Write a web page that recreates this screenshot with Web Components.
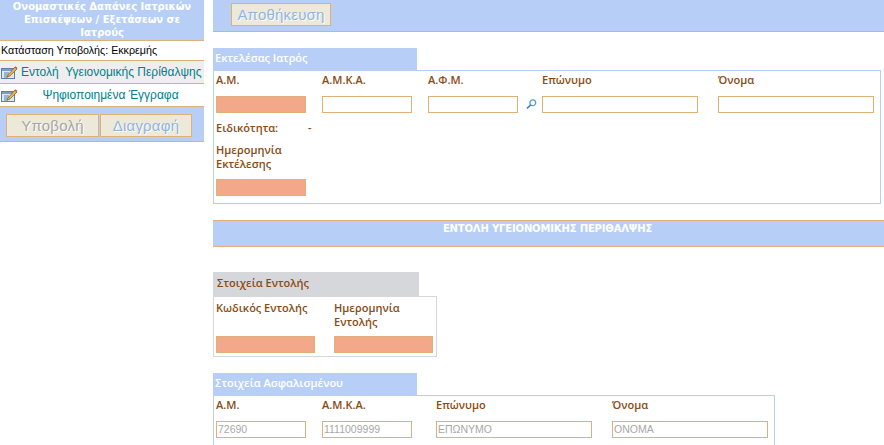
<!DOCTYPE html>
<html lang="el">
<head>
<meta charset="utf-8">
<title>Ονομαστικές Δαπάνες</title>
<style>
  html, body { margin: 0; height: 100%; overflow: hidden; background: #fff; }
  body { font-family: "DejaVu Sans", sans-serif; font-size: 10px; }
</style>
</head>
<body>

<template id="edit-icon">
  <svg width="18" height="14" viewBox="0 0 18 14">
    <rect x="1.5" y="3.5" width="13" height="10" fill="#dfe8f5" stroke="#5f7fa8"/>
    <rect x="2" y="4" width="12" height="2" fill="#7f9cc4"/>
    <path d="M4 8h5M4 10h5M4 12h4" stroke="#5f7fa8"/>
    <path d="M8 10l7-8 2 2-7 7-3 1z" fill="#e9b44c" stroke="#7a5a20" stroke-width=".7"/>
    <path d="M14.6 2.4l1-1.2 1.8 1.8-1 1.1z" fill="#c8503c"/>
  </svg>
</template>

<app-shell>
  <app-sidebar slot="side" heading="Ονομαστικές Δαπάνες Ιατρικών Επισκέψεων / Εξετάσεων σε Ιατρούς" status="Κατάσταση Υποβολής: Εκκρεμής">
    <side-link active>Εντολή&nbsp; Υγειονομικής Περίθαλψης</side-link>
    <side-link center>Ψηφιοποιημένα Έγγραφα</side-link>
    <button-bar slot="actions">
      <ui-button width="93" tone="grey">Υποβολή</ui-button>
      <ui-button width="92">Διαγραφή</ui-button>
    </button-bar>
  </app-sidebar>

  <main-area>
    <top-bar><ui-button width="100">Αποθήκευση</ui-button></top-bar>

    <form-panel style="margin-top:16px" heading="Εκτελέσας Ιατρός" tab-width="204" panel-height="134"
      cols="90px 90px 90px 156px 156px" gaps="16px 16px 24px 20px">
      <form-field label="Α.Μ." kind="req"></form-field>
      <form-field label="Α.Μ.Κ.Α."></form-field>
      <form-field label="Α.Φ.Μ." search></form-field>
      <form-field label="Επώνυμο"></form-field>
      <form-field label="Όνομα"></form-field>
      <info-row label="Ειδικότητα:" value="-"></info-row>
      <form-field class="date" label="Ημερομηνία Εκτέλεσης" kind="req"></form-field>
    </form-panel>

    <section-bar>ΕΝΤΟΛΗ ΥΓΕΙΟΝΟΜΙΚΗΣ ΠΕΡΙΘΑΛΨΗΣ</section-bar>

    <form-panel style="margin-top:25px" heading="Στοιχεία Εντολής" tab-width="206" panel-width="224" panel-height="61" tone="grey"
      cols="99px 99px" gaps="19px">
      <form-field class="tall" label="Κωδικός Εντολής" kind="req"></form-field>
      <form-field class="tall" label="Ημερομηνία Εντολής" kind="req"></form-field>
    </form-panel>

    <form-panel style="margin-top:16px" heading="Στοιχεία Ασφαλισμένου" tab-width="204" panel-width="562" panel-height="60"
      cols="90px 90px 156px 156px" gaps="16px 24px 20px">
      <form-field label="Α.Μ." value="72690"></form-field>
      <form-field label="Α.Μ.Κ.Α." value="1111009999"></form-field>
      <form-field label="Επώνυμο" value="ΕΠΩΝΥΜΟ"></form-field>
      <form-field label="Όνομα" value="ΟΝΟΜΑ"></form-field>
    </form-panel>
  </main-area>
</app-shell>

<script>
const BLUE = '#b7cff7';
const ORANGE = '#dfb077';
const SALMON = '#f4a88a';
const BROWN = '#8b4a12';
const LABEL_FONT = '600 11px "Open Sans", sans-serif';

function define(name, styles, markup, setup) {
  customElements.define(name, class extends HTMLElement {
    constructor() {
      super();
      this.attachShadow({ mode: 'open' });
    }
    connectedCallback() {
      this.shadowRoot.innerHTML = `<style>${styles}</style>` + markup(this);
      if (setup) setup(this);
    }
  });
}

define('app-shell', `
  :host { display: flex; width: 884px; height: 445px; overflow: hidden; }
  .side { width: 204px; flex: none; margin-right: 9px; }
  .main { flex: 1; min-width: 0; }
`, () => `<div class="side"><slot name="side"></slot></div><div class="main"><slot></slot></div>`);

define('app-sidebar', `
  :host { display: block; color: #000; }
  header {
    background: ${BLUE}; color: #fff; font-weight: bold; text-align: center;
    height: 40px; line-height: 13px; font-size: 10px; border-bottom: 1px solid ${ORANGE};
    overflow: hidden; padding: 0 8px;
  }
  .status { height: 19px; padding-left: 1px; font: 10.7px/19px "Liberation Sans", sans-serif; }
  .links { border-bottom: 1px solid ${ORANGE}; }
  .actions { background: ${BLUE}; height: 35px; box-sizing: border-box; border-bottom: 1px solid ${ORANGE}; }
`, el => `
  <header>${el.getAttribute('heading')}</header>
  <div class="status">${el.getAttribute('status')}</div>
  <div class="links"><slot></slot></div>
  <div class="actions"><slot name="actions"></slot></div>
`);

define('side-link', `
  :host { display: flex; align-items: center; height: 22px; border-top: 1px solid ${ORANGE}; color: #00808a; font: 12px "Liberation Sans", sans-serif; }
  :host([active]) { background: #eeeeee; }
  svg { flex: none; margin-right: 3px; }
  span { flex: 1; white-space: nowrap; }
  :host([center]) span { text-align: center; padding-right: 4px; }
`, el => document.getElementById('edit-icon').innerHTML + `<span><slot></slot></span>`);

define('button-bar', `
  :host { display: flex; gap: 1px; padding: 7px 0 0 6px; }
`, () => `<slot></slot>`);

define('ui-button', `
  :host { display: inline-block; }
  button {
    display: block; height: 23px; padding: 0; box-sizing: border-box;
    background: #ece9d8; border: 1px solid ${ORANGE}; color: #8fb4e0;
    font: 15px "Liberation Sans", sans-serif; letter-spacing: .2px; text-shadow: 1px 1px 0 #fff;
  }
  :host([tone="grey"]) button { color: #a5a5a5; }
`, el => `<button type="button" style="width:${el.getAttribute('width')}px"><slot></slot></button>`);

define('main-area', `:host { display: block; }`, () => `<slot></slot>`);

define('top-bar', `
  :host { display: block; height: 31px; background: ${BLUE}; border-bottom: 1px solid ${ORANGE}; padding-left: 18px; }
  div { padding-top: 3px; }
`, () => `<div><slot></slot></div>`);

define('form-panel', `
  :host { display: block; }
  .tab { height: 22px; background: ${BLUE}; color: #fff; font: ${LABEL_FONT}; line-height: 19px; padding-left: 2px; box-sizing: border-box; }
  .box { border: 1px solid ${BLUE}; box-sizing: border-box; padding: 0 2px; display: grid; align-content: start; }
  :host([tone="grey"]) .tab { background: #d6d7db; color: ${BROWN}; padding-left: 4px; height: 24px; line-height: 22px; }
  :host([tone="grey"]) .box { border-color: #d6d7db; }
`, el => {
  const cols = el.getAttribute('cols').split(' ');
  const gaps = (el.getAttribute('gaps') || '').split(' ');
  // gap widths differ per column, so they become their own tracks
  const tracks = cols.map((c, i) => gaps[i] ? `${c} ${gaps[i]}` : c).join(' ');
  const w = el.getAttribute('panel-width');
  return `
    <div class="tab" style="width:${el.getAttribute('tab-width')}px">${el.getAttribute('heading')}</div>
    <div class="box" style="width:${w ? w + 'px' : '668px'};height:${el.getAttribute('panel-height')}px;grid-template-columns:${tracks}"><slot></slot></div>
  `;
}, el => {
  // every field starts on an odd track, the even ones are the gaps
  [...el.children].forEach((child, i) => {
    if (child.tagName === 'FORM-FIELD' && !child.classList.contains('date')) child.style.gridColumn = String(i * 2 + 1);
    else child.style.gridColumn = child.tagName === 'INFO-ROW' ? '1 / -1' : '1';
  });
});

define('form-field', `
  :host { display: flex; flex-direction: column; position: relative; height: 42px; justify-content: flex-end; color: ${BROWN}; }
  :host(.date) { height: 55px; }
  :host(.tall) { height: 56px; }
  label { font: ${LABEL_FONT}; line-height: 14px; margin-bottom: auto; padding-top: 2px; }
  :host(.tall) label { padding-top: 4px; }
  .box { display: block; height: 17px; box-sizing: border-box; border: 1px solid ${ORANGE}; background: #fff; color: #a8a8a8; font: 10.5px/15px "Liberation Sans", sans-serif; padding-left: 1px; overflow: hidden; }
  :host([kind="req"]) .box { background: ${SALMON}; }
  svg { position: absolute; right: -19px; bottom: 4px; }
`, el => `
  <label>${el.getAttribute('label')}</label>
  <span class="box">${el.getAttribute('value') || ''}</span>
  ${el.hasAttribute('search') ? `<svg width="11" height="10" viewBox="0 0 11 10" fill="none"><circle cx="6.8" cy="3.8" r="2.9" stroke="#5b9bd0" stroke-width="1.3"/><path d="M4.6 6L1 9.3" stroke="#3f7fb5" stroke-width="1.6"/></svg>` : ''}
`);

define('info-row', `
  :host { display: flex; height: 22px; align-items: center; color: ${BROWN}; font: ${LABEL_FONT}; margin-top: 3px; margin-bottom: 3px; }
  b { width: 92px; font-weight: inherit; }
`, el => `<b>${el.getAttribute('label')}</b><span>${el.getAttribute('value')}</span>`);

define('section-bar', `
  :host { display: block; margin-top: 16px; height: 25px; background: ${BLUE}; border-top: 1px solid ${ORANGE}; border-bottom: 1px solid ${ORANGE}; color: #fff; font-weight: bold; text-align: center; font-size: 10px; letter-spacing: -.15px; line-height: 16px; padding-right: 2px; }
`, () => `<slot></slot>`);
</script>
</body>
</html>
